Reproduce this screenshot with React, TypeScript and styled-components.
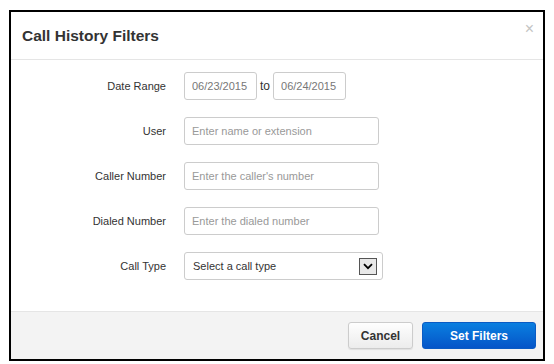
import React from "react";
import styled, { createGlobalStyle } from "styled-components";

const Global = createGlobalStyle`
  html, body { margin: 0; padding: 0; background: #fff; }
  body { font-family: "Liberation Sans", Arial, sans-serif; }
  * { box-sizing: border-box; }
`;

const Modal = styled.div`
  margin: 10px 0 0 9px;
  width: 536px;
  height: 351px;
  border: 2px solid #000;
  display: flex;
  flex-direction: column;
  background: #fff;
`;

const Header = styled.div`
  height: 48px;
  border-bottom: 1px solid #e5e5e5;
  display: flex;
  align-items: center;
  justify-content: space-between;
  padding: 0 9px 0 11px;
`;

const Title = styled.h3`
  margin: 0;
  font-size: 15.5px;
  font-weight: bold;
  color: #333;
`;

const Close = styled.span`
  color: #c4c4c4;
  font-size: 16px;
  line-height: 1;
  margin-top: -14px;
`;

const Body = styled.div`
  flex: 1;
  padding: 12px 0 0 0;
  display: flex;
  flex-direction: column;
  gap: 17px;
`;

const Row = styled.div`
  display: flex;
  align-items: center;
  height: 28px;
`;

const Label = styled.label`
  width: 155px;
  text-align: right;
  font-size: 11px;
  color: #333;
  margin-right: 18px;
`;

const Input = styled.input<{ $w: number }>`
  width: ${(p) => p.$w}px;
  height: 28px;
  border: 1px solid #ccc;
  border-radius: 3px;
  padding: 0 7px;
  font-family: "Liberation Sans", Arial, sans-serif;
  font-size: 11px;
  color: #777;
  background: #fff;
  outline: none;
  &::placeholder { color: #999; }
`;

const To = styled.span`
  font-size: 12px;
  color: #333;
  margin: 0 3px 0 3px;
`;

const SelectBox = styled.div`
  width: 199px;
  height: 28px;
  border: 1px solid #ccc;
  border-radius: 3px;
  display: flex;
  align-items: center;
  justify-content: space-between;
  padding: 0 5px 0 8px;
  font-size: 11px;
  color: #333;
`;

const Arrow = styled.span`
  width: 18px;
  height: 17px;
  border: 1px solid #555;
  background: #e8e8e8;
  display: flex;
  align-items: center;
  justify-content: center;
`;

const Footer = styled.div`
  height: 48px;
  background: #f3f3f3;
  border-top: 1px solid #e5e5e5;
  display: flex;
  align-items: center;
  justify-content: flex-end;
  gap: 9px;
  padding-right: 7px;
`;

const Button = styled.button<{ $primary?: boolean }>`
  height: 27px;
  border-radius: 3px;
  font-family: "Liberation Sans", Arial, sans-serif;
  font-weight: bold;
  font-size: 12px;
  padding: 0;
  cursor: pointer;
  width: ${(p) => (p.$primary ? 114 : 65)}px;
  color: ${(p) => (p.$primary ? "#fff" : "#333")};
  border: 1px solid ${(p) => (p.$primary ? "#0a5bc4" : "#ccc")};
  background: ${(p) =>
    p.$primary
      ? "linear-gradient(#0a7fe0, #0555c8)"
      : "linear-gradient(#fefefe, #ececec)"};
  box-shadow: ${(p) => (p.$primary ? "none" : "0 1px 1px rgba(0,0,0,0.08)")};
`;

export default function App() {
  return (
    <>
      <Global />
      <Modal>
        <Header>
          <Title>Call History Filters</Title>
          <Close>×</Close>
        </Header>
        <Body>
          <Row>
            <Label>Date Range</Label>
            <Input $w={73} defaultValue="06/23/2015" />
            <To>to</To>
            <Input $w={73} defaultValue="06/24/2015" />
          </Row>
          <Row>
            <Label>User</Label>
            <Input $w={195} placeholder="Enter name or extension" />
          </Row>
          <Row>
            <Label>Caller Number</Label>
            <Input $w={195} placeholder="Enter the caller's number" />
          </Row>
          <Row>
            <Label>Dialed Number</Label>
            <Input $w={195} placeholder="Enter the dialed number" />
          </Row>
          <Row>
            <Label>Call Type</Label>
            <SelectBox>
              <span>Select a call type</span>
              <Arrow>
                <svg width="10" height="7" viewBox="0 0 10 7">
                  <path d="M1 1.2 L5 5.2 L9 1.2" fill="none" stroke="#000" strokeWidth="1.8" />
                </svg>
              </Arrow>
            </SelectBox>
          </Row>
        </Body>
        <Footer>
          <Button>Cancel</Button>
          <Button $primary>Set Filters</Button>
        </Footer>
      </Modal>
    </>
  );
}
